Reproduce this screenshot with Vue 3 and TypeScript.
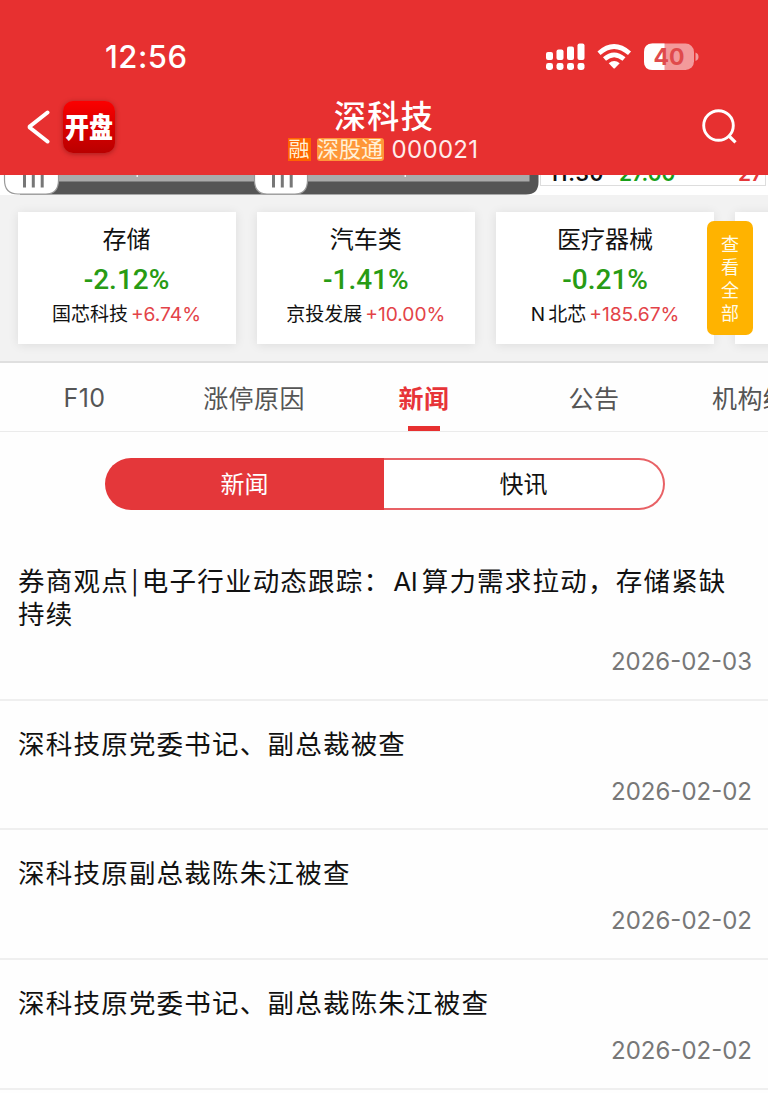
<script setup lang="ts">
interface Sector {
  name: string
  change: string
  prefix?: string
  stock: string
  gain: string
}

interface NewsItem {
  title: string
  date: string
}

interface Run {
  text: string
  kind: string
}

const sectors: Sector[] = [
  { name: '存储', change: '-2.12%', stock: '国芯科技', gain: '+6.74%' },
  { name: '汽车类', change: '-1.41%', stock: '京投发展', gain: '+10.00%' },
  { name: '医疗器械', change: '-0.21%', prefix: 'N', stock: '北芯', gain: '+185.67%' },
]

const tabs: string[] = ['F10', '涨停原因', '新闻', '公告', '机构统计']
const activeTab = 2

const news: NewsItem[] = [
  { title: '券商观点|电子行业动态跟踪：AI算力需求拉动，存储紧缺持续', date: '2026-02-03' },
  { title: '深科技原党委书记、副总裁被查', date: '2026-02-02' },
  { title: '深科技原副总裁陈朱江被查', date: '2026-02-02' },
  { title: '深科技原党委书记、副总裁陈朱江被查', date: '2026-02-02' },
]

// Splits a headline so Latin words and separators get their own side spacing.
function runs(title: string): Run[] {
  return title
    .split(/(\||[A-Za-z]+)/)
    .filter((part) => part.length > 0)
    .map((part) => ({
      text: part,
      kind: part === '|' ? 'bar' : /^[A-Za-z]+$/.test(part) ? 'latin' : 'han',
    }))
}
</script>

<template>
  <div class="page">
    <header class="header">
      <div class="status">
        <span class="time">12:56</span>
        <svg class="indicators" width="156" height="30" viewBox="0 0 156 30">
          <g fill="#fff">
            <rect x="1" y="9" width="7" height="8" rx="2" />
            <rect x="11.5" y="6.5" width="7" height="10.5" rx="2" />
            <rect x="22" y="3.5" width="7" height="13.5" rx="2" />
            <rect x="32.5" y="0.5" width="7" height="16.5" rx="2" />
            <rect x="1" y="20" width="7" height="7" rx="2.4" />
            <rect x="11.5" y="20" width="7" height="7" rx="2.4" />
            <rect x="22" y="20" width="7" height="7" rx="2.4" />
            <rect x="32.5" y="20" width="7" height="7" rx="2.4" />
          </g>
          <g fill="none" stroke="#fff" stroke-width="4.6">
            <path d="M54 10.2 Q69 -3.2 84.5 10.2" />
            <path d="M59.5 16 Q69 7.6 79 16" />
          </g>
          <path d="M63.7 20.2 Q69.2 16 74.7 20.2 L69.9 25.2 Q69.2 25.9 68.5 25.2 Z" fill="#fff" />
          <rect x="99" y="0.5" width="50" height="26.5" rx="8.5" fill="#f39a9b" />
          <path d="M119.5 .5 H107.5 Q99 .5 99 9 V18.5 Q99 27 107.5 27 H119.5 Z" fill="#fff" />
          <path d="M150.5 9.5 Q153.5 10.5 153.5 13.8 Q153.5 17 150.5 18 Z" fill="#f39a9b" />
          <text x="124" y="22" text-anchor="middle" class="battery">40</text>
        </svg>
      </div>
      <div class="nav">
        <div class="nav-left">
          <svg width="24" height="34" viewBox="0 0 24 34">
            <path d="M20.5 2.5 L3 16.2 Q2.2 17 3 17.8 L20.5 31.5" fill="none" stroke="#fff" stroke-width="4" stroke-linecap="round" stroke-linejoin="round" />
          </svg>
          <div class="logo"><span>开盘</span></div>
        </div>
        <div class="heading">
          <div class="stock-name">深科技</div>
          <div class="stock-meta">
            <span class="badge margin">融</span>
            <span class="badge connect">深股通</span>
            <span class="code">000021</span>
          </div>
        </div>
        <svg class="search" width="36" height="36" viewBox="0 0 36 36">
          <circle cx="16.5" cy="16.5" r="14.8" fill="none" stroke="#fff" stroke-width="2.9" />
          <path d="M26.5 26.5 L33.5 33.3" stroke="#fff" stroke-width="3.2" />
        </svg>
      </div>
    </header>

    <section class="chart-tail">
      <svg width="540" height="20" viewBox="0 0 540 20">
        <path d="M20 0 H538.5 V7 Q538.5 19.5 526 19.5 H20 Z" fill="#555" />
        <rect x="20" y="0" width="509.5" height="6.5" fill="#aaa" />
        <rect x="136.5" y="0" width="1.5" height="2" fill="#eee" />
        <rect x="404.5" y="0" width="1.5" height="2" fill="#eee" />
        <g fill="#fff" stroke="#999" stroke-width="1.2">
          <path d="M4.5 -2 V5 Q4.5 19 18 19 H46 Q58.5 19 58.5 5 V-2 Z" />
          <path d="M254.500 -2 V5 Q254.500 19 267 19 H295 Q307.500 19 307.500 5 V-2 Z" />
        </g>
        <path d="M24.5 0 V12.500 M33.300 0 V12.500 M42.200 0 V12.500 M273.500 0 V12.500 M282.300 0 V12.500 M291.200 0 V12.500" stroke="#777" stroke-width="3" />
      </svg>
      <div class="quotes">
        <span class="q-time">11:30</span>
        <span class="q-price">27.00</span>
        <span class="q-volume">27</span>
      </div>
    </section>

    <section class="sectors">
      <article v-for="s in sectors" :key="s.name" class="card">
        <div class="card-name">{{ s.name }}</div>
        <div class="card-change">{{ s.change }}</div>
        <div class="card-stock">
          <span v-if="s.prefix" class="prefix">{{ s.prefix }}</span><span class="stock">{{ s.stock }}</span><span class="gain">{{ s.gain }}</span>
        </div>
      </article>
      <article class="card"></article>
      <button class="view-all">查看全部</button>
    </section>

    <nav class="tabs">
      <div v-for="(t, i) in tabs" :key="t" class="tab" :class="{ active: i === activeTab }">{{ t }}</div>
    </nav>

    <div class="segment">
      <div class="seg on">新闻</div>
      <div class="seg">快讯</div>
    </div>

    <ul class="news">
      <li v-for="n in news" :key="n.title" class="news-item">
        <div class="news-title"><span v-for="(r, i) in runs(n.title)" :key="i" :class="r.kind">{{ r.text }}</span></div>
        <div class="news-date">{{ n.date }}</div>
      </li>
    </ul>
  </div>
</template>

<style>
body {
  margin: 0;
  background: #fff;
  overflow: hidden;
}
</style>

<style scoped>
.page {
  width: 768px;
  height: 1093px;
  overflow: hidden;
  background: #fefefe;
  font-family: Inter, "Noto Sans CJK SC", sans-serif;
  color: #111;
}
.header {
  height: 175px;
  box-sizing: border-box;
  padding-top: 37px;
  background: #e73030;
  color: #fff;
}
.status {
  height: 40px;
  display: flex;
  align-items: center;
  justify-content: space-between;
  padding: 0 67px 0 105px;
}
.time {
  margin-top: -1px;
  font-size: 31px;
  font-weight: 500;
  letter-spacing: 0.5px;
}
.indicators {
  margin-top: 2px;
}
.battery {
  font: 700 23px Inter, sans-serif;
  fill: #e04a4c;
}
.nav {
  display: grid;
  grid-template-columns: 200px 1fr 200px;
  height: 98px;
}
.nav-left {
  display: flex;
  align-items: center;
  gap: 12px;
  padding: 2px 0 0 27px;
}
.logo {
  width: 52px;
  height: 52px;
  border-radius: 10px;
  background: linear-gradient(#fb0000, #b90000);
  box-shadow: 0 1px 5px rgba(70, 0, 0, 0.4);
  display: flex;
  align-items: center;
  justify-content: center;
}
.logo span {
  flex: none;
  font-size: 24px;
  font-weight: 900;
  line-height: 52px;
  transform: translateY(1px) scaleY(1.2);
}
.heading {
  display: flex;
  flex-direction: column;
  align-items: center;
  padding-top: 21px;
}
.stock-name {
  font-size: 32px;
  font-weight: 500;
  line-height: 38px;
  letter-spacing: 1.4px;
}
.stock-meta {
  display: flex;
  align-items: center;
  height: 26px;
  margin-right: 2px;
}
.badge {
  height: 23px;
  line-height: 22px;
  text-align: center;
  font-size: 21px;
  color: #fff1d8;
}
.margin {
  width: 23px;
  background: #ff6500;
  margin-right: 6px;
}
.connect {
  width: 67px;
  background: #ff9638;
  border-radius: 3px;
  font-size: 22px;
  margin-right: 8px;
}
.code {
  font-size: 24px;
  color: #ffeceb;
  letter-spacing: 0.3px;
}
.search {
  justify-self: end;
  margin: 32px 30px 0 0;
}
.chart-tail {
  display: flex;
  height: 20px;
  overflow: hidden;
  background: #fff;
}
.chart-tail svg {
  flex: none;
}
.quotes {
  flex: none;
  width: 226px;
  height: 10.5px;
  box-sizing: border-box;
  display: flex;
  align-items: flex-end;
  border: solid #ddd;
  border-width: 0 1.5px 1.5px;
  font-size: 21px;
  font-weight: 600;
  line-height: 20px;
}
.quotes span {
  margin-bottom: 0.5px;
}
.q-time {
  width: 70px;
  padding-left: 8px;
  letter-spacing: 0.7px;
}
.q-price {
  width: 119px;
  color: #189f18;
}
.q-volume {
  color: #e5373a;
}
.sectors {
  position: relative;
  height: 167.5px;
  box-sizing: border-box;
  padding: 17px 0 0 17.5px;
  display: flex;
  gap: 21.3px;
  overflow: hidden;
  background: #f2f2f2;
  border-bottom: 2px solid #dfdfdf;
}
.card {
  flex: none;
  width: 218px;
  height: 131.5px;
  background: #fff;
  box-shadow: 0 1px 10px rgba(0, 0, 0, 0.09);
  text-align: center;
  white-space: nowrap;
}
.card-name {
  margin-top: 10px;
  font-size: 24px;
  line-height: 36px;
}
.card-change {
  margin-top: 4px;
  font-family: Roboto, sans-serif;
  font-size: 28px;
  font-weight: 500;
  line-height: 36px;
  color: #289b14;
}
.card-stock {
  margin-top: 1px;
  line-height: 30px;
}
.prefix {
  font-size: 19px;
  margin-right: 3px;
}
.stock {
  font-size: 19px;
}
.gain {
  margin-left: 3px;
  font-size: 19.2px;
  color: #e34348;
}
.view-all {
  position: absolute;
  left: 707px;
  top: 26px;
  width: 46px;
  height: 114px;
  margin: 0;
  padding: 2px 13px 0;
  border: 0;
  border-radius: 7px;
  background: #ffb300;
  color: #fffbe9;
  font-family: inherit;
  font-size: 18px;
  line-height: 23px;
  word-break: break-all;
}
.tabs {
  display: flex;
  height: 69px;
  box-sizing: border-box;
  border-bottom: 1.5px solid #ebebeb;
  overflow: hidden;
}
.tab {
  flex: none;
  width: 170px;
  height: 68px;
  display: flex;
  align-items: center;
  justify-content: center;
  position: relative;
  font-size: 25px;
  letter-spacing: 0.4px;
  color: #555;
}
.tab:first-child {
  width: 169px;
  box-sizing: border-box;
  padding-top: 2px;
}
.tab:last-child {
  justify-content: flex-start;
  padding-left: 33px;
}
.tab.active {
  color: #e73438;
  font-weight: 700;
}
.tab.active::after {
  content: "";
  position: absolute;
  bottom: 0;
  left: 69px;
  width: 32px;
  height: 5px;
  background: #e73030;
}
.segment {
  display: flex;
  width: 560px;
  height: 52px;
  margin: 26.5px 0 0 105px;
}
.seg {
  flex: 1;
  box-sizing: border-box;
  border: 2px solid #e86165;
  border-left: 0;
  border-radius: 0 26px 26px 0;
  background: #fff;
  text-align: center;
  font-size: 24px;
  line-height: 50px;
}
.seg.on {
  border: 0;
  border-radius: 26px 0 0 26px;
  background: #e4373a;
  color: #fff;
  line-height: 53px;
}
.news {
  list-style: none;
  margin: 26.5px 0 0;
  padding: 0;
}
.news-item {
  height: 129.7px;
  box-sizing: border-box;
  padding: 27px 16px 0 18px;
  border-bottom: 2px solid #efefef;
}
.news-item:first-child {
  height: 164px;
  padding-top: 28px;
}
.news-title {
  padding-right: 16px;
  font-size: 26.5px;
  line-height: 33px;
  letter-spacing: 1.22px;
}
.bar {
  display: inline-block;
  margin: 0 2px 0 2px;
  font-size: 23px;
  line-height: 20px;
}
.latin {
  margin: 0 4.5px 0 2px;
  font-size: 26px;
  letter-spacing: -0.5px;
}
.news-date {
  margin-top: 16px;
  text-align: right;
  font-size: 24px;
  line-height: 30px;
  color: #777;
}
</style>
